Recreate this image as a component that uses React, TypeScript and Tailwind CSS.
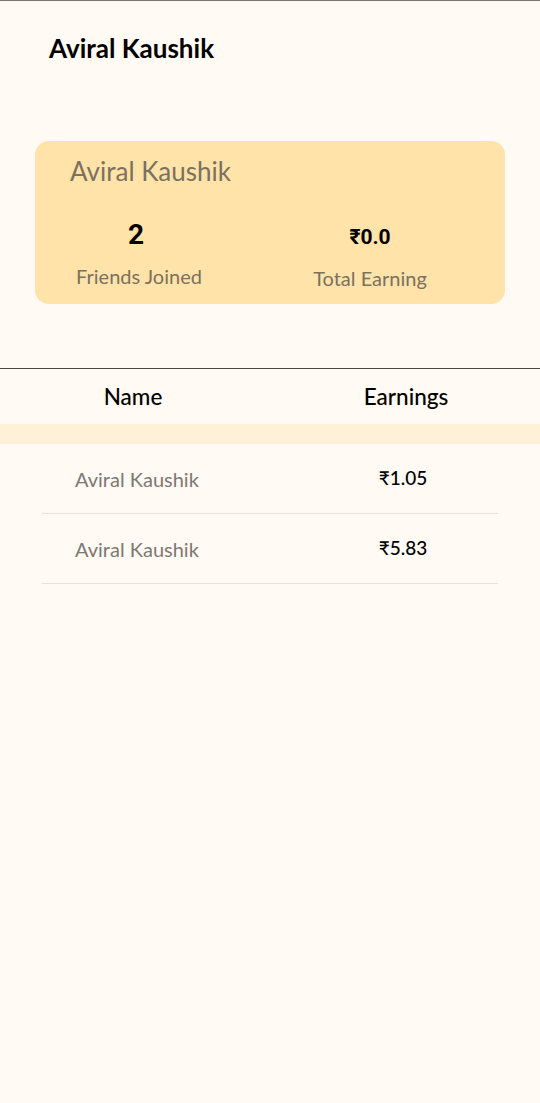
const referrals = [
  { name: 'Aviral Kaushik', amount: '₹1.05' },
  { name: 'Aviral Kaushik', amount: '₹5.83' },
];

export default function App() {
  return (
    <div
      className="min-h-[1103px] w-full bg-[#fffaf3] border-t border-[#7d766e]"
      style={{ fontFamily: 'Lato, "Noto Sans", sans-serif' }}
    >
      {/* Header */}
      <div className="pt-[32px] pl-[49px]">
        <h1 className="text-[26px] leading-[30px] font-bold text-black">Aviral Kaushik</h1>
      </div>

      {/* Summary card */}
      <div className="mt-[78px] mx-[35px] rounded-[14px] bg-[#ffe3a9] pt-[15px] pb-[14px]">
        <div className="pl-[35px] text-[26px] leading-[30px] text-[#7b715e]">Aviral Kaushik</div>
        <div className="mt-[32px] flex pl-[24px] gap-[71px]">
          <div className="w-[160px] flex flex-col items-center">
            <div
              className="pr-[6px] text-[28px] leading-[34px] font-bold text-black"
              style={{ fontFamily: 'Roboto, Arial, sans-serif' }}
            >
              2
            </div>
            <div className="mt-[12px] text-[20px] leading-[24px] text-[#7b715e]">Friends Joined</div>
          </div>
          <div className="w-[160px] flex flex-col items-center pt-[2px]">
            <div
              className="text-[21px] leading-[34px] font-bold text-black"
              style={{ fontFamily: 'Roboto, Arial, sans-serif' }}
            >
              ₹0.0
            </div>
            <div className="mt-[12px] text-[20px] leading-[24px] text-[#7b715e]">Total Earning</div>
          </div>
        </div>
      </div>

      {/* Table */}
      <div className="mt-[64px] border-t border-[#4a4744]">
        <div className="grid grid-cols-2 h-[55px] items-center text-[22.5px] font-medium text-black">
          <div className="text-center pr-[4px]">Name</div>
          <div className="text-center pl-[2px]">Earnings</div>
        </div>
        <div className="h-[20px] bg-[#fff1d7]" />
        {referrals.map((r, i) => (
          <div key={i}>
            <div className="grid grid-cols-2 h-[69px] items-center text-[20px]">
              <div className="pl-[75px] text-[#7d7873]">{r.name}</div>
              <div className="text-center pr-[4px] text-[19px] text-black font-medium">{r.amount}</div>
            </div>
            <div className="mx-[42px] h-px bg-[#e6e1da]" />
          </div>
        ))}
      </div>
    </div>
  );
}
